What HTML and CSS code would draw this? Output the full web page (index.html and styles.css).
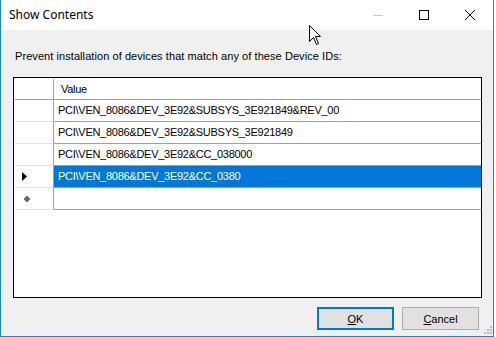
FILE: index.html
```html
<!DOCTYPE html>
<html lang="en">
<head>
    <meta charset="UTF-8">
    <title>Show Contents</title>
    <link rel="stylesheet" href="styles.css">
</head>
<body>
    <div class="window">
        <div class="titlebar">
            <span class="title">Show Contents</span>
            <div class="caption-buttons">
                <span class="cap min"><svg width="10" height="10" viewBox="0 0 10 10"><path d="M0 5.5H10" stroke="#c8c8c8" stroke-width="1"/></svg></span>
                <span class="cap max"><svg width="10" height="10" viewBox="0 0 10 10"><rect x="0.5" y="0.5" width="9" height="9" fill="none" stroke="#000" stroke-width="1"/></svg></span>
                <span class="cap close"><svg width="10" height="10" viewBox="0 0 10 10"><path d="M0 0L10 10M10 0L0 10" stroke="#000" stroke-width="1"/></svg></span>
            </div>
        </div>
        <div class="content">
            <p class="label">Prevent installation of devices that match any of these Device IDs:</p>
            <div class="grid">
                <div class="row header">
                    <div class="rowhead"></div>
                    <div class="cell">Value</div>
                </div>
                <div class="row">
                    <div class="rowhead"></div>
                    <div class="cell">PCI\VEN_8086&amp;DEV_3E92&amp;SUBSYS_3E921849&amp;REV_00</div>
                </div>
                <div class="row">
                    <div class="rowhead"></div>
                    <div class="cell">PCI\VEN_8086&amp;DEV_3E92&amp;SUBSYS_3E921849</div>
                </div>
                <div class="row">
                    <div class="rowhead"></div>
                    <div class="cell">PCI\VEN_8086&amp;DEV_3E92&amp;CC_038000</div>
                </div>
                <div class="row selected">
                    <div class="rowhead"><svg width="5" height="9" viewBox="0 0 5 9"><path d="M0 0L5 4.5L0 9Z" fill="#000"/></svg></div>
                    <div class="cell">PCI\VEN_8086&amp;DEV_3E92&amp;CC_0380</div>
                </div>
                <div class="row newrow">
                    <div class="rowhead"><svg width="6" height="6" viewBox="0 0 6 6"><path d="M2 0H4V1H5V2H6V4H5V5H4V6H2V5H1V4H0V2H1V1H2Z" fill="#6d6d6d"/></svg></div>
                    <div class="cell"></div>
                </div>
            </div>
            <div class="buttons">
                <button class="btn default"><u>O</u>K</button>
                <button class="btn"><u>C</u>ancel</button>
            </div>
            <svg class="grip" width="8" height="8" viewBox="0 0 8 8">
                <rect x="6" y="0" width="2" height="2" fill="#b8b8b8"/>
                <rect x="3" y="3" width="2" height="2" fill="#b8b8b8"/>
                <rect x="6" y="3" width="2" height="2" fill="#b8b8b8"/>
                <rect x="0" y="6" width="2" height="2" fill="#b8b8b8"/>
                <rect x="3" y="6" width="2" height="2" fill="#b8b8b8"/>
                <rect x="6" y="6" width="2" height="2" fill="#b8b8b8"/>
            </svg>
        </div>
    </div>
    <svg class="cursor" width="13" height="20" viewBox="0 0 13 20">
        <path d="M0.5 0.5V16.5L4.5 12.5L7.5 19.5L9.5 18.5L6.5 11.5H11.5Z" fill="#fff" stroke="#000" stroke-width="1" stroke-linejoin="miter"/>
    </svg>
</body>
</html>
```

FILE: styles.css
```css
html, body {
    margin: 0;
    padding: 0;
    background: #fff;
}

body {
    position: relative;
    width: 496px;
    height: 337px;
    overflow: hidden;
    font-family: "Liberation Sans", Arial, sans-serif;
    font-size: 11px;
    color: #000;
}

.window {
    width: 492px;
    height: 336px;
    border: 1px solid #1883d7;
    border-top: none;
    display: flex;
    flex-direction: column;
    background: #f0f0f0;
}

.titlebar {
    height: 30px;
    background: #fff;
    display: flex;
    align-items: center;
    justify-content: space-between;
}

.title {
    font-family: "Noto Sans", "Open Sans", sans-serif;
    font-size: 12px;
    padding-left: 8px;
    padding-bottom: 1px;
}

.caption-buttons {
    display: flex;
    height: 30px;
}

.cap {
    width: 46px;
    height: 30px;
    display: flex;
    align-items: center;
    justify-content: center;
}

.content {
    position: relative;
    flex: 1;
    padding: 0 11px 0 12px;
    display: flex;
    flex-direction: column;
}

.label {
    margin: 19px 0 0 2px;
    line-height: 14px;
    height: 14px;
    letter-spacing: 0.07px;
}

.grid {
    margin-top: 14px;
    height: 218px;
    border: 1px solid #000;
    background: #fff;
    padding: 1px 0 0 1px;
}

.row {
    display: flex;
    height: 21px;
    border-bottom: 1px solid #a0a0a0;
}

.row.header {
    height: 20px;
}

.rowhead {
    width: 39px;
    flex: none;
    border-right: 1px solid #a0a0a0;
    display: flex;
    align-items: center;
    padding-left: 7px;
    box-sizing: border-box;
    margin-bottom: -1px;
    border-bottom: 1px solid #e3e3e3;
}

.row.header .rowhead {
    border-bottom: 1px solid #a0a0a0;
}

.cell {
    flex: 1;
    line-height: 21px;
    padding-left: 4px;
    white-space: nowrap;
    letter-spacing: -0.27px;
}

.row.header .cell {
    line-height: 20px;
    padding-left: 7px;
}

.row.selected .cell {
    background: #0078d7;
    color: #fff;
}

.row.newrow .rowhead {
    padding-left: 9px;
}

.buttons {
    display: flex;
    justify-content: flex-end;
    gap: 8px;
    margin-top: 9px;
    padding-right: 3px;
}

.btn {
    width: 77px;
    height: 23px;
    background: #e1e1e1;
    border: 1px solid #adadad;
    font-family: "Liberation Sans", Arial, sans-serif;
    font-size: 11px;
    color: #000;
    padding: 0;
}

.btn.default {
    border: 2px solid #0078d7;
}

.grip {
    position: absolute;
    right: 1px;
    bottom: 2px;
}

.cursor {
    position: absolute;
    left: 309px;
    top: 25px;
}
```
